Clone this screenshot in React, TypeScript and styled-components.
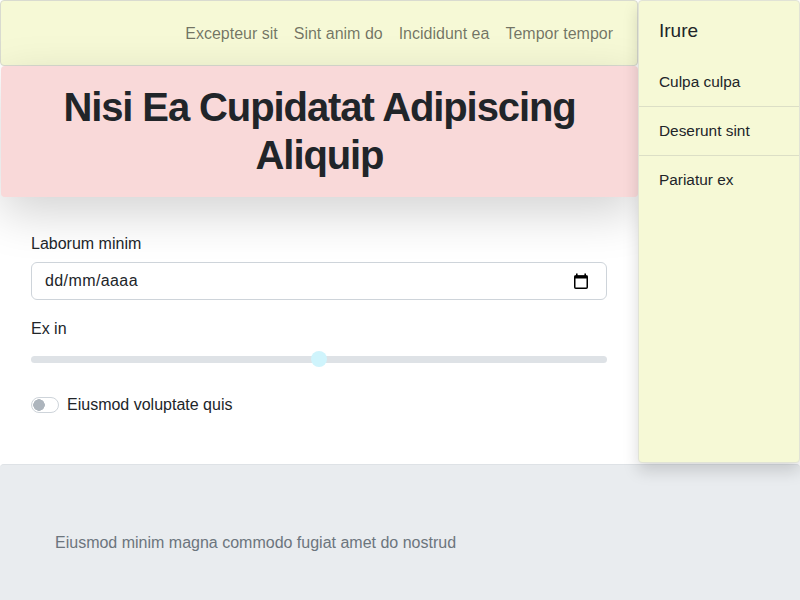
import React from 'react';
import styled, { createGlobalStyle } from 'styled-components';

const GlobalStyle = createGlobalStyle`
    * {
        box-sizing: border-box;
    }

    body {
        margin: 0;
        background: #ffffff;
        color: #212529;
        font-family: "Liberation Sans", Arial, sans-serif;
        font-size: 16px;
        line-height: 1.5;
    }
`;

const Page = styled.div`
    display: grid;
    grid-template-columns: 638px 1fr;
    width: 800px;
`;

const MainColumn = styled.div`
    display: flex;
    flex-direction: column;
`;

const NavBar = styled.nav`
    display: flex;
    justify-content: flex-end;
    padding: 13px 16px 11px;
    background: #f6f9d6;
    border: 1px solid #d9dbd0;
    border-radius: 4px;

    .navList {
        display: flex;
        margin: 0;
        padding: 0;
        list-style: none;
    }

    .navItem {
        padding: 8px 8px;
        color: rgba(0, 0, 0, 0.55);
        font-size: 16px;
    }
`;

const Hero = styled.header`
    margin-left: 1px;
    padding: 17px 24px 18px;
    background: #f9d9d9;
    border-radius: 4px;
    box-shadow: 0 1rem 3rem rgba(0, 0, 0, 0.175);
    text-align: center;

    h1 {
        margin: 0;
        font-size: 40px;
        font-weight: 700;
        line-height: 48px;
        letter-spacing: -1.1px;
        color: #212529;
    }
`;

const FormArea = styled.form`
    display: flex;
    flex-direction: column;
    padding: 35px 31px 46px 31px;
`;

const Field = styled.div<{ $gap?: number }>`
    margin-bottom: ${(p) => p.$gap ?? 16}px;
`;

const Label = styled.label`
    display: block;
    margin-bottom: 6px;
    font-size: 16px;
`;

const DateBox = styled.div`
    display: flex;
    align-items: center;
    justify-content: space-between;
    height: 38px;
    padding: 6px 17px 6px 13px;
    border: 1px solid #ced4da;
    border-radius: 6px;
    background: #ffffff;
    font-size: 16px;
    letter-spacing: 0.4px;
    color: #212529;
`;

const Range = styled.input`
    display: block;
    width: 100%;
    height: 24px;
    margin: 0;
    padding: 0;
    background: transparent;
    appearance: none;
    -webkit-appearance: none;

    &::-webkit-slider-runnable-track {
        height: 7px;
        border-radius: 4px;
        background: #dee2e6;
    }

    &::-webkit-slider-thumb {
        -webkit-appearance: none;
        width: 16px;
        height: 16px;
        margin-top: -4.5px;
        border: 0;
        border-radius: 50%;
        background: #cff4fc;
    }
`;

const SwitchRow = styled.div`
    display: flex;
    align-items: center;
    gap: 8px;
    font-size: 16px;
`;

const Switch = styled.input`
    appearance: none;
    -webkit-appearance: none;
    width: 28px;
    height: 16px;
    margin: 0;
    border: 1px solid #ced4da;
    border-radius: 8px;
    background: #ffffff
        radial-gradient(circle at 7px 50%, #adb5bd 5.5px, transparent 6px);
`;

const Sidebar = styled.aside`
    position: relative;
    z-index: 1;
    background: #f6f9d6;
    border: 1px solid #e1e3d6;
    border-radius: 4px;
    box-shadow: 0 0.5rem 1rem rgba(0, 0, 0, 0.15);

    .sideTitle {
        margin: 0;
        padding: 18px 20px 15px;
        font-size: 19px;
        font-weight: 400;
        line-height: 24px;
        color: #212529;
    }

    .sideList {
        margin: 0;
        padding: 0;
        list-style: none;
    }

    .sideItem {
        padding: 12px 20px;
        font-size: 15.4px;
        line-height: 24px;
        color: #212529;
        border-bottom: 1px solid #dcdfc6;
    }

    .sideItem:last-child {
        border-bottom: 0;
    }
`;

const Footer = styled.footer`
    grid-column: 1 / -1;
    margin-top: 1px;
    padding: 66px 55px 66px;
    background: #e9ecef;
    border-top: 1px solid #dee2e6;
    border-radius: 4px 4px 0 0;
    color: #6c757d;
    font-size: 16px;
`;

const CalendarIcon = () => (
    <svg width="16" height="17" viewBox="0 0 16 17" fill="none">
        <rect x="3" y="0.5" width="1.6" height="3" fill="#000" />
        <rect x="11.4" y="0.5" width="1.6" height="3" fill="#000" />
        <rect x="1.5" y="2.5" width="13" height="3" fill="#000" />
        <rect x="1.75" y="3" width="12.5" height="12.25" rx="1" stroke="#000" strokeWidth="1.5" />
    </svg>
);

const navLinks = ['Excepteur sit', 'Sint anim do', 'Incididunt ea', 'Tempor tempor'];
const sideLinks = ['Culpa culpa', 'Deserunt sint', 'Pariatur ex'];

const App = () => {
    return (
        <>
            <GlobalStyle />
            <Page>
                <MainColumn>
                    <NavBar>
                        <ul className="navList">
                            {navLinks.map((link) => (
                                <li className="navItem" key={link}>
                                    {link}
                                </li>
                            ))}
                        </ul>
                    </NavBar>
                    <Hero>
                        <h1>Nisi Ea Cupidatat Adipiscing Aliquip</h1>
                    </Hero>
                    <FormArea>
                        <Field $gap={17}>
                            <Label>Laborum minim</Label>
                            <DateBox>
                                <span>dd/mm/aaaa</span>
                                <CalendarIcon />
                            </DateBox>
                        </Field>
                        <Field $gap={22}>
                            <Label>Ex in</Label>
                            <Range type="range" min={0} max={100} defaultValue={50} />
                        </Field>
                        <SwitchRow>
                            <Switch type="checkbox" />
                            <span>Eiusmod voluptate quis</span>
                        </SwitchRow>
                    </FormArea>
                </MainColumn>
                <Sidebar>
                    <h5 className="sideTitle">Irure</h5>
                    <ul className="sideList">
                        {sideLinks.map((link) => (
                            <li className="sideItem" key={link}>
                                {link}
                            </li>
                        ))}
                    </ul>
                </Sidebar>
                <Footer>Eiusmod minim magna commodo fugiat amet do nostrud</Footer>
            </Page>
        </>
    );
};

export default App;
